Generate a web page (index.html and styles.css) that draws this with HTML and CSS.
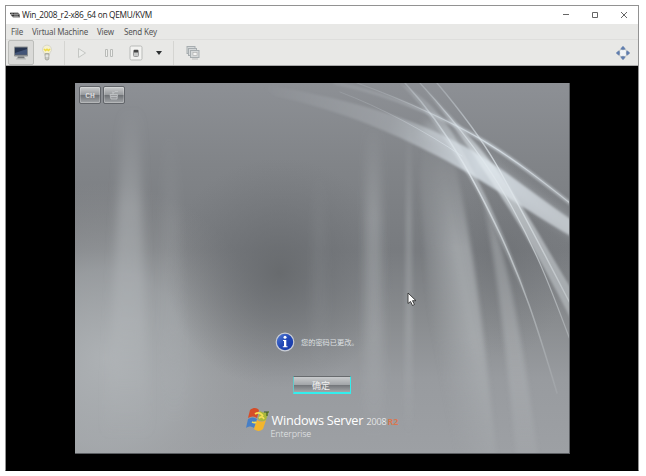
FILE: index.html
```html
<!DOCTYPE html>
<html lang="en">
<head>
<meta charset="utf-8">
<title>Win_2008_r2-x86_64 on QEMU/KVM</title>
<link rel="stylesheet" href="styles.css">
</head>
<body>
<main class="window">
  <header class="titlebar">
    <svg class="app-icon" width="10" height="7" viewBox="0 0 10 7"><path d="M0 .5h8l2 2v3H3L1 3.5z" fill="#777"/><path d="M0 1.5h8M2 3.5h7" stroke="#333"/><path d="M2 0v3M5 0v5M7 1v5" stroke="#bbb" stroke-width=".7"/></svg>
    <h1>Win_2008_r2-x86_64 on QEMU/KVM</h1>
    <div class="controls">
      <svg width="8" height="8" viewBox="0 0 8 8"><path d="M1 3.500h6" stroke="#666"/></svg>
      <svg width="8" height="8" viewBox="0 0 8 8"><path d="M1.500 1.500h5v5h-5z" fill="none" stroke="#666"/></svg>
      <svg width="8" height="8" viewBox="0 0 8 8"><path d="M1 1l6 6M7 1L1 7" stroke="#555" stroke-width=".9"/></svg>
    </div>
  </header>
  <nav class="menubar"><span class="m-file">File</span><span class="m-vm">Virtual Machine</span><span class="m-view">View</span><span class="m-key">Send Key</span></nav>
  <div class="toolbar">
    <button class="tool active" aria-label="Console"><svg width="16" height="16" viewBox="0 0 16 16"><rect x="1" y="1.500" width="14" height="10" rx="1" fill="#8b8f91"/><rect x="2" y="2.500" width="12" height="7" fill="#26344f"/><path d="M2 8l12-4v5.500H2z" fill="#435578"/><path d="M5 11.500h6l1 2H4z" fill="#777b7d"/><path d="M3 14h10" stroke="#b5b7b6"/></svg></button>
    <button class="tool bulb" aria-label="Details"><svg width="12" height="18" viewBox="0 0 12 18"><path d="M6 1a4.500 4.500 0 0 0-3 7.800L4 12h4l1-3.200A4.500 4.500 0 0 0 6 1z" fill="#f5f1d0" stroke="#d0cfc7" stroke-width=".8"/><path d="M3 5l1.500 1.500L6 5.300l1.500 1.200L9 5" fill="none" stroke="#eedb45" stroke-width="1.500"/><path d="M4.200 9.500h3.600v5.500l-1 1H5.200l-1-1z" fill="#c9cac4" stroke="#95978f" stroke-width=".7"/><path d="M4.500 12h3" stroke="#fff"/></svg></button>
    <i class="divider"></i>
    <button class="tool play" aria-label="Run"><svg width="10" height="12" viewBox="0 0 10 12"><path d="M1.500 1.500L8.500 6l-7 4.500z" fill="#ecedeb" stroke="#c5c7c4"/></svg></button>
    <button class="tool pause" aria-label="Pause"><svg width="10" height="12" viewBox="0 0 10 12"><path d="M1.500 2.500h2v7h-2zM6.500 2.500h2v7h-2z" fill="#efefed" stroke="#b9bbb8"/></svg></button>
    <button class="tool power" aria-label="Shut down"><svg width="14" height="16" viewBox="0 0 14 16"><rect x="1" y="1" width="12" height="14" rx="1.500" fill="#f3f3f1" stroke="#b9bbb9"/><rect x="4.500" y="5" width="5" height="6.500" rx="1" fill="#c7c9c8" stroke="#999"/><path d="M5 5h4v2.500H5z" fill="#444"/></svg></button>
    <button class="tool more" aria-label="More"><svg width="8" height="6" viewBox="0 0 8 6"><path d="M1 1h6L4 5z" fill="#2d3032"/></svg></button>
    <i class="divider"></i>
    <button class="tool snaps" aria-label="Snapshots"><svg width="14" height="16" viewBox="0 0 14 16"><g fill="#d5d8d9" stroke="#a7adb0"><rect x="1" y="1.500" width="8" height="7"/><rect x="2.500" y="3.500" width="8" height="7"/><rect x="4.500" y="5.500" width="8.500" height="7"/></g><rect x="7" y="7.500" width="4" height="3" fill="#f4f4f3" stroke="#aaa" stroke-width=".6"/><path d="M6 14h6" stroke="#bbb"/></svg></button>
    <button class="tool full" aria-label="Fullscreen"><svg width="16" height="16" viewBox="0 0 16 16"><rect x="4.500" y="4.500" width="7" height="7" rx="1.500" fill="#f2f4f6" stroke="#b6bbbf"/><g fill="#5f7daf" stroke="#8d9eb9" stroke-width=".5"><path d="M8 1l2.200 2.500-1 1.200H6.800l-1-1.200zM8 15l2.200-2.500-1-1.200H6.800l-1 1.200zM1 8l2.500-2.200 1.200 1v2.400l-1.200 1zM15 8l-2.500-2.200-1.200 1v2.400l1.200 1z"/></g></svg></button>
  </div>
  <section class="viewport">
    <div class="desktop">
      <svg class="wallpaper" width="494" height="370" viewBox="0 0 494 370">
        <defs>
          <linearGradient id="base" x2="0" y2="1"><stop stop-color="#8d9095"/><stop offset=".22" stop-color="#818488"/><stop offset=".45" stop-color="#787b7f"/><stop offset=".64" stop-color="#898c8f"/><stop offset=".8" stop-color="#989b9f"/><stop offset="1" stop-color="#9da0a4"/></linearGradient>
          <radialGradient id="dark"><stop stop-color="#64676a" stop-opacity=".85"/><stop offset=".4" stop-color="#696c70" stop-opacity=".55"/><stop offset="1" stop-color="#707377" stop-opacity="0"/></radialGradient>
          <radialGradient id="light"><stop stop-color="#b0b4b7" stop-opacity=".9"/><stop offset=".5" stop-color="#a9adb0" stop-opacity=".6"/><stop offset="1" stop-color="#999" stop-opacity="0"/></radialGradient>
          <linearGradient id="beam" x2="0" y2="1"><stop stop-color="#b6babd" stop-opacity="0"/><stop offset=".3" stop-color="#b6babd" stop-opacity=".45"/><stop offset=".65" stop-color="#b6babd" stop-opacity=".4"/><stop offset="1" stop-color="#b6babd" stop-opacity="0"/></linearGradient>
          <linearGradient id="wide" x1="346" x2="410" y1="190" y2="178" gradientUnits="userSpaceOnUse"><stop stop-color="#adb1b4" stop-opacity="0"/><stop offset=".6" stop-color="#adb1b4" stop-opacity=".75"/><stop offset="1" stop-color="#adb1b4" stop-opacity=".6"/></linearGradient>
          <linearGradient id="fadein" x2="0" y2="1"><stop offset=".05" stop-color="#000"/><stop offset=".38" stop-color="#fff"/><stop offset=".65" stop-color="#fff"/><stop offset="1" stop-color="#555"/></linearGradient>
          <mask id="rise"><rect x="320" y="40" width="174" height="330" fill="url(#fadein)"/></mask>
          <linearGradient id="ribbon" x1="190" x2="494" y1="0" y2="120" gradientUnits="userSpaceOnUse"><stop stop-color="#d8dfe5" stop-opacity="0"/><stop offset=".4" stop-color="#d8dfe5" stop-opacity=".25"/><stop offset=".7" stop-color="#dce5ec" stop-opacity=".8"/><stop offset="1" stop-color="#d2d8dd" stop-opacity=".7"/></linearGradient>
          <linearGradient id="fall" x2="0" y2="340" gradientUnits="userSpaceOnUse"><stop stop-color="#dce5eb" stop-opacity=".25"/><stop offset=".25" stop-color="#e1e8ed" stop-opacity=".8"/><stop offset=".65" stop-color="#d4dadd" stop-opacity=".5"/><stop offset="1" stop-color="#d4dadd" stop-opacity="0"/></linearGradient>
          <filter id="soft" x="-50%" y="-10%" width="200%" height="120%"><feGaussianBlur stdDeviation="5 3"/></filter>
          <filter id="thin" x="-100%" y="-10%" width="300%" height="120%"><feGaussianBlur stdDeviation="2.200"/></filter>
          <filter id="edge"><feGaussianBlur stdDeviation=".8"/></filter>
          <filter id="glow" x="-20%" y="-20%" width="140%" height="140%"><feGaussianBlur stdDeviation="5"/></filter>
        </defs>
        <rect width="494" height="370" fill="url(#base)"/>
        <ellipse cx="30" cy="275" rx="165" ry="175" fill="url(#light)"/>
        <ellipse cx="205" cy="190" rx="115" ry="115" fill="url(#dark)"/>
        <ellipse cx="430" cy="175" rx="65" ry="100" fill="url(#dark)" opacity=".45"/>
        <g fill="url(#beam)"><path d="M48 25h16l10 330H30z" filter="url(#soft)"/><path d="M88 45h13l12 310H86z" filter="url(#soft)" opacity=".3"/><path d="M291 40h14l4 315h-20z" filter="url(#soft)" opacity=".9"/><path d="M332 40h4l2 315h-9z" filter="url(#thin)" opacity=".8"/><path d="M239 85h10l5 210h-19z" filter="url(#soft)" opacity=".2"/></g>
        <g mask="url(#rise)">
          <path d="M350 40L372 50C392 120 408 230 422 380H365C357 270 348 160 345 90z" fill="url(#wide)" filter="url(#thin)"/>
          <path d="M402 95C423 140 442 210 464 380H442C430 260 420 160 402 95z" fill="#bdc1c4" opacity=".4" filter="url(#thin)"/>
        </g>
        <path d="M350 44C388 61 448 113 504 149" fill="none" stroke="#e0e9ef" stroke-width="14" opacity=".28" filter="url(#glow)"/>
        <g filter="url(#edge)">
          <path d="M180 0C270 15 333 33 383 60C423 80 460 113 504 142V158C450 126 410 99 372 78C325 53 270 28 200 13z" fill="url(#ribbon)"/>
          <path d="M325 0C362 20 378 49 393 78C412 115 434 160 452 215C430 172 415 128 395 96C373 60 355 30 325 0z" fill="url(#fall)" opacity=".55"/>
          <path d="M345 0C376 35 407 62 438 110C466 152 480 180 499 210V242C470 185 447 145 427 115C397 68 370 30 345 0z" fill="url(#fall)" opacity=".85"/>
        </g>
        <g fill="none" stroke-linecap="round">
          <path d="M260 0C320 12 380 40 412 60C445 80 470 101 500 124" stroke="url(#ribbon)" stroke-width="3.500" filter="url(#edge)" opacity=".8"/>
          <path d="M282 0C330 17 385 43 412 60C445 80 472 102 500 124" stroke="url(#ribbon)" stroke-width="1.100"/>
          <path d="M362 0C389 32 407 57 421 81C448 129 470 172 499 228" stroke="url(#fall)" stroke-width="1.400"/>
          <path d="M345 0C388 47 415 84 438 126C466 177 479 214 500 270" stroke="url(#fall)" stroke-width="1.200"/>
          <path d="M330 0C377 51 405 109 426 153C448 201 460 236 482 310" stroke="url(#fall)" stroke-width="1.500"/>
          <path d="M265 9C305 24 350 48 387 73" stroke="url(#ribbon)"/>
        </g>
      </svg>
      <div class="input-tools">
        <button class="glass">CH</button>
        <button class="glass" aria-label="Input method"><svg width="12" height="11" viewBox="0 0 12 11"><path d="M2 4.500h7.500l-.5 4.500H3z" fill="#989a9d" stroke="#c5c8ca" stroke-width=".8"/><path d="M4 4.500l3-3h3M4 2l2 1M3 6.500h6" fill="none" stroke="#c5c8ca" stroke-width=".8"/></svg></button>
      </div>
      <div class="message">
        <svg width="20" height="20" viewBox="0 0 20 20"><defs><linearGradient id="info" x2="1" y2="1"><stop stop-color="#5b83d7"/><stop offset=".5" stop-color="#2147b4"/><stop offset="1" stop-color="#1737a8"/></linearGradient></defs><circle cx="10" cy="10" r="8.800" fill="url(#info)" stroke="#c9cdd5" stroke-width="1.200"/><circle cx="10" cy="5.200" r="1.500" fill="#fff"/><path d="M8 8h3.300v6.200h1.200v1H7.800v-1H9V9H8z" fill="#fff"/></svg>
        <span>您的密码已更改。</span>
      </div>
      <button class="confirm">确定</button>
      <div class="brand">
        <svg width="25" height="25" viewBox="0 0 25 25"><path d="M4 3c4-3 7-2 9 0l-2 8c-3-2-6-2-9 0z" fill="#d54d28"/><path d="M14 4c3 2 6 2 9 0l-3 9c-3 2-6 1-8-1z" fill="#a9b83c"/><path d="M2 12c3-2 6-2 9 0l-3 9c-3-2-5-2-8 0z" fill="#477fc6"/><path d="M11 13c3 2 6 2 9 0l-3 9c-3 3-7 2-9 0z" fill="#f3b52c"/><path d="M9 7c3-2 6-1 8 2M6 15c2 1 3 1 4 0M13 11c3-2 4-1 5 1" fill="none" stroke="#f5df55" stroke-width="1.800"/><path d="M18 5h5M21 5v4" stroke="#3d5a2a" stroke-width="1.200"/></svg>
        <div class="brand-text"><div class="product"><span class="name">Windows Server</span><span class="year">2008</span><span class="r2">R2</span></div><div class="edition">Enterprise</div></div>
      </div>
      <svg class="cursor" width="10" height="15" viewBox="0 0 10 15"><path d="M1 1v10.500l2.500-2 2 4 2-1-2-3.800H9z" fill="#fff" stroke="#333" stroke-width=".9"/></svg>
    </div>
  </section>
</main>
</body>
</html>
```
FILE: styles.css
```css
* { box-sizing: border-box; }
body { margin: 0; padding: 5px 0 0 5px; height: 476px; overflow: hidden; background: #fff; font-family: "Noto Sans", "Noto Sans CJK SC", sans-serif; }
button { padding: 0; border: 0; background: none; font: inherit; }
svg { display: block; flex: none; }
.window { width: 634px; height: 466px; border: 1px solid #929292; border-bottom-color: #444; background: #e8e8e6; display: flex; flex-direction: column; }
.titlebar { height: 18px; background: #fff; display: flex; align-items: center; padding: 0 10px 0 4px; flex: none; }
.titlebar h1 { margin: 0 0 0 2px; font: 8.300px/18px "Open Sans", sans-serif; letter-spacing: -.28px; color: #222; white-space: nowrap; width: 132px; }
.controls { margin-left: auto; display: flex; gap: 21px; }
.menubar { height: 16px; flex: none; display: flex; align-items: center; padding-left: 5px; font-size: 8px; letter-spacing: -.18px; line-height: 14px; color: #555; border-bottom: 1px solid #dededc; white-space: nowrap; }
.m-file { width: 21px; }
.m-vm { width: 65px; }
.m-view { width: 27px; }
.toolbar { height: 26px; flex: none; display: flex; align-items: center; padding: 0 7px 0 2px; border-bottom: 1px solid #aaa; }
.tool { height: 25px; display: grid; place-items: center; }
.active { width: 26px; background: #dadad8; border: 1px solid #bcbdba; border-radius: 2px; }
.bulb { width: 26px; }
.divider { width: 1px; height: 24px; background: #d5d5d2; margin: 0 4px; }
.play { width: 26px; }
.pause { width: 28px; }
.power { width: 26px; }
.more { width: 20px; }
.snaps { width: 29px; }
.full { margin-left: auto; }
.viewport { flex: 1; background: #000; display: flex; justify-content: center; padding: 17px 0; }
.desktop { position: relative; width: 495px; height: 371px; margin-left: 1px; border: solid #5b5e62; border-width: 0 1px 1px 0; display: flex; flex-direction: column; align-items: center; overflow: hidden; }
.wallpaper { position: absolute; inset: 0; }
.input-tools { position: relative; align-self: flex-start; display: flex; gap: 2px; margin: 3px 0 0 4px; }
.glass { width: 22px; height: 18px; display: grid; place-items: center; border: 1px solid #62656a; border-radius: 2px; background: linear-gradient(#cacccd, #989b9e 48%, #6e7175 52%, #a3a6a9); box-shadow: inset 0 0 0 1px rgba(255,255,255,.22); color: #eee; font: 8px "Liberation Mono", monospace; }
.message { position: relative; display: flex; align-items: center; gap: 6px; margin: 228px 0 0 -10px; width: 84px; color: #dfe1e3; font: 7.200px/20px "Noto Sans CJK SC", sans-serif; white-space: nowrap; }
.confirm { position: relative; width: 58px; height: 18px; margin-top: 24px; padding-right: 2px; border: 1px solid #32eeee; border-top-color: #686b6e; border-left-color: #62caca; background: linear-gradient(#c9cbcd, #a4a7aa 47%, #74777b 52%, #aaadaf); box-shadow: inset 0 -1px #32eeee; color: #f0f0f0; font: 9px/15px "Noto Sans CJK SC", sans-serif; }
.brand { position: relative; display: flex; width: 156px; margin: 13px 0 0 3px; color: #fff; white-space: nowrap; }
.brand-text { margin: 6px 0 0 1px; }
.product { display: flex; align-items: baseline; height: 15px; }
.name { font: 12.700px/15px "Open Sans", sans-serif; letter-spacing: -.25px; width: 95px; }
.year { font-size: 9px; line-height: 12px; font-weight: 300; width: 21px; letter-spacing: -.1px; }
.r2 { font-size: 9px; line-height: 12px; color: #dc754d; font-weight: 600; }
.edition { font-size: 9px; line-height: 11px; height: 11px; margin-left: -1px; color: #e6e8e9; font-weight: 300; letter-spacing: -.15px; }
.cursor { position: absolute; left: 332px; top: 209px; }
```
